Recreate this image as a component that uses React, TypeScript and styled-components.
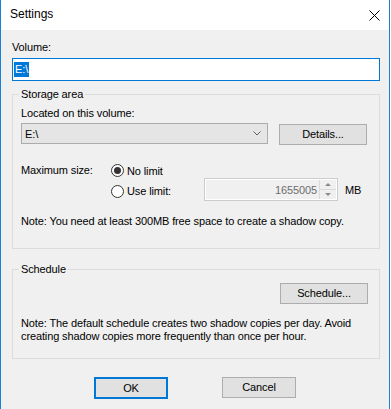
import styled, { createGlobalStyle } from "styled-components";

const GlobalStyle = createGlobalStyle`
  html, body {
    margin: 0;
    padding: 0;
    background: #ffffff;
  }
  body {
    font-family: "Liberation Sans", Arial, sans-serif;
    font-size: 11px;
    letter-spacing: -0.12px;
    color: #000;
  }
`;

const Window = styled.div`
  width: 390px;
  height: 409px;
  box-sizing: border-box;
  border-left: 1px solid #1a7fd5;
  border-right: 1px solid #1a7fd5;
  background: #f0f0f0;
  overflow: hidden;
`;

const TitleBar = styled.div`
  height: 30px;
  background: #ffffff;
  display: flex;
  align-items: center;
  justify-content: space-between;
  padding: 0 9px 0 9px;
`;

const Title = styled.div`
  font-size: 12px;
  line-height: 15px;
  letter-spacing: 0;
  margin-top: -1px;
`;

const Body = styled.div`
  padding: 11px 9px 0 11px;
  display: flex;
  flex-direction: column;
`;

const Label = styled.div`
  line-height: 13px;
  white-space: nowrap;
`;

const VolumeInput = styled.div`
  margin-top: 4px;
  height: 23px;
  box-sizing: border-box;
  border: 1px solid #0078d7;
  background: #ffffff;
  display: flex;
  align-items: center;
  padding-left: 1px;
`;

const Selection = styled.span`
  background: #0078d7;
  color: #fff;
  line-height: 15px;
  padding: 0 1px;
`;

const Group = styled.fieldset<{ $top: number }>`
  margin: ${(p) => p.$top}px 0 0 0;
  padding: 0;
  border: 1px solid #dcdcdc;
  min-width: 0;
`;

const Legend = styled.legend`
  margin-left: 6px;
  padding: 0 2px;
  line-height: 13px;
`;

const GroupInner = styled.div<{ $pt: number; $pb: number }>`
  padding: ${(p) => p.$pt}px 11px ${(p) => p.$pb}px 8px;
  display: flex;
  flex-direction: column;
`;

const VolumeRow = styled.div`
  margin-top: 3px;
  display: flex;
  align-items: flex-start;
  gap: 11px;
`;

const Combo = styled.div`
  width: 247px;
  height: 21px;
  box-sizing: border-box;
  background: #e5e5e5;
  border: 1px solid #acacac;
  display: flex;
  align-items: center;
  justify-content: space-between;
  padding: 0 6px 0 3px;
`;

const Button = styled.div<{ $default?: boolean; $width?: number }>`
  width: ${(p) => p.$width ?? 88}px;
  height: ${(p) => (p.$default ? 22 : 21)}px;
  box-sizing: border-box;
  background: #e1e1e1;
  border: ${(p) => (p.$default ? "2px solid #0078d7" : "1px solid #adadad")};
  display: flex;
  align-items: center;
  justify-content: center;
  line-height: 13px;
`;

const DetailsButton = styled(Button)`
  margin-top: 1px;
`;

const SizeGrid = styled.div`
  margin-top: 19px;
  display: grid;
  grid-template-columns: 90px 93px 134px auto;
  row-gap: 1px;
  align-items: center;
`;

const RadioOption = styled.div<{ $shift?: number }>`
  display: flex;
  align-items: center;
  gap: 3px;
  margin-top: ${(p) => p.$shift ?? 0}px;
`;

const RadioCircle = styled.span<{ $checked?: boolean }>`
  width: 13px;
  height: 13px;
  box-sizing: border-box;
  border-radius: 50%;
  border: 1px solid #333333;
  background: #ffffff;
  display: flex;
  align-items: center;
  justify-content: center;
  &::after {
    content: "";
    width: 7px;
    height: 7px;
    border-radius: 50%;
    background: ${(p) => (p.$checked ? "#333333" : "transparent")};
  }
`;

const Spinner = styled.div`
  height: 23px;
  box-sizing: border-box;
  border: 1px solid #cccccc;
  box-shadow: inset 0 0 0 1px #ffffff;
  display: flex;
  align-items: stretch;
  justify-content: flex-end;
`;

const SpinValue = styled.div`
  color: #6d6d6d;
  display: flex;
  align-items: center;
  padding-right: 2px;
`;

const SpinButtons = styled.div`
  width: 16px;
  margin: 1px 1px 1px 0;
  display: flex;
  flex-direction: column;
  border-left: 1px solid #dadada;
`;

const SpinHalf = styled.div<{ $down?: boolean }>`
  flex: 1;
  display: flex;
  align-items: center;
  justify-content: center;
  border-top: ${(p) => (p.$down ? "1px solid #dadada" : "none")};
`;

const Arrow = styled.span<{ $down?: boolean }>`
  width: 0;
  height: 0;
  border-left: 3px solid transparent;
  border-right: 3px solid transparent;
  ${(p) =>
    p.$down ? "border-top: 3px solid #8a8a8a;" : "border-bottom: 3px solid #8a8a8a;"}
`;

const Unit = styled.div`
  padding-left: 7px;
`;

const Note = styled.div<{ $top: number }>`
  margin-top: ${(p) => p.$top}px;
  line-height: 13px;
  white-space: nowrap;
`;

const RightRow = styled.div`
  margin-top: 7px;
  display: flex;
  justify-content: flex-end;
`;

const ButtonRow = styled.div`
  margin: 18px 0 0 -2px;
  display: flex;
  justify-content: center;
  gap: 54px;
`;

const CloseIcon = () => (
  <svg width="11" height="11" viewBox="0 0 11 11">
    <path d="M0.5 0.5 L10.5 10.5 M10.5 0.5 L0.5 10.5" stroke="#000" strokeWidth="1" fill="none" />
  </svg>
);

const Chevron = () => (
  <svg width="8" height="5" viewBox="0 0 8 5">
    <path d="M0.5 0.5 L4 4 L7.5 0.5" stroke="#606060" strokeWidth="1" fill="none" />
  </svg>
);

export default function App() {
  return (
    <>
      <GlobalStyle />
      <Window>
        <TitleBar>
          <Title>Settings</Title>
          <CloseIcon />
        </TitleBar>
        <Body>
          <Label>Volume:</Label>
          <VolumeInput>
            <Selection>E:\</Selection>
          </VolumeInput>

          <Group $top={7}>
            <Legend>Storage area</Legend>
            <GroupInner $pt={6} $pb={20}>
              <Label>Located on this volume:</Label>
              <VolumeRow>
                <Combo>
                  <span>E:\</span>
                  <Chevron />
                </Combo>
                <DetailsButton>Details...</DetailsButton>
              </VolumeRow>
              <SizeGrid>
                <Label>Maximum size:</Label>
                <RadioOption>
                  <RadioCircle $checked />
                  <span>No limit</span>
                </RadioOption>
                <div />
                <div />
                <div />
                <RadioOption $shift={3}>
                  <RadioCircle />
                  <span>Use limit:</span>
                </RadioOption>
                <Spinner>
                  <SpinValue>1655005</SpinValue>
                  <SpinButtons>
                    <SpinHalf>
                      <Arrow />
                    </SpinHalf>
                    <SpinHalf $down>
                      <Arrow $down />
                    </SpinHalf>
                  </SpinButtons>
                </Spinner>
                <Unit>MB</Unit>
              </SizeGrid>
              <Note $top={14}>
                Note: You need at least 300MB free space to create a shadow copy.
              </Note>
            </GroupInner>
          </Group>

          <Group $top={14}>
            <Legend>Schedule</Legend>
            <GroupInner $pt={0} $pb={15}>
              <RightRow>
                <Button>Schedule...</Button>
              </RightRow>
              <Note $top={13}>
                Note: The default schedule creates two shadow copies per day. Avoid
                <br />
                creating shadow copies more frequently than once per hour.
              </Note>
            </GroupInner>
          </Group>

          <ButtonRow>
            <Button $default $width={74}>
              OK
            </Button>
            <Button $width={74}>Cancel</Button>
          </ButtonRow>
        </Body>
      </Window>
    </>
  );
}
